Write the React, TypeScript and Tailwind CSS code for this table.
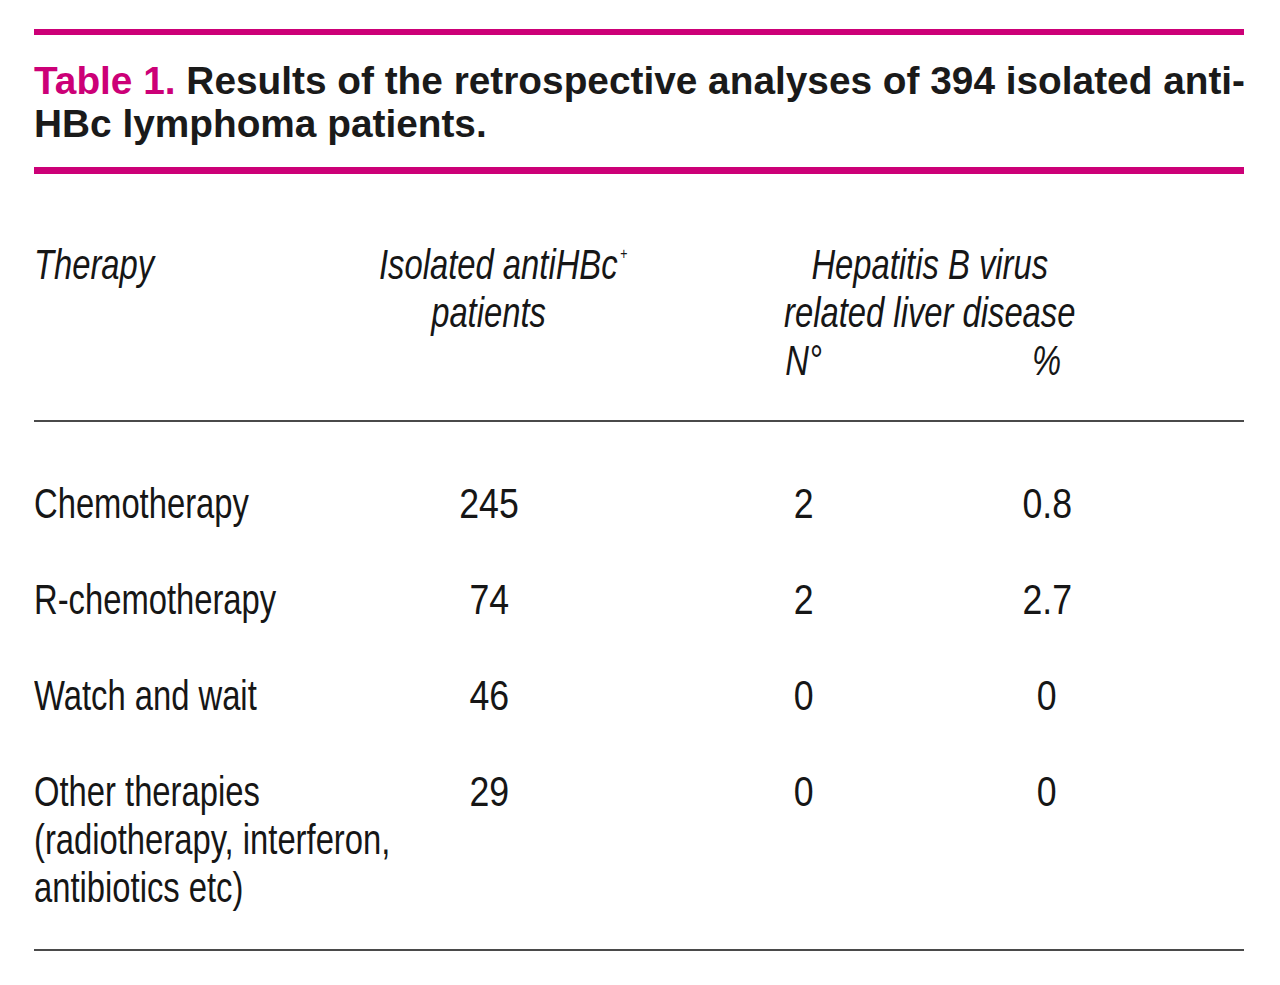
const body = "font-['Liberation_Sans',Arial,sans-serif] text-[42px] leading-[48px] text-[#161616]";

// the reference face is a condensed grotesque; Liberation Sans squeezed horizontally stands in for it
function Narrow({ children, center = false }: { children: React.ReactNode; center?: boolean }) {
  return (
    <span
      className={`inline-block whitespace-nowrap scale-x-[0.78] ${center ? "origin-center" : "origin-left"}`}
    >
      {children}
    </span>
  );
}

// digits in the reference run a little wider than its letters
function Num({ children }: { children: React.ReactNode }) {
  return <span className="inline-block origin-center scale-x-[0.85] whitespace-nowrap">{children}</span>;
}

const rows: { therapy: string[]; patients: string; n: string; pct: string }[] = [
  { therapy: ["Chemotherapy"], patients: "245", n: "2", pct: "0.8" },
  { therapy: ["R-chemotherapy"], patients: "74", n: "2", pct: "2.7" },
  { therapy: ["Watch and wait"], patients: "46", n: "0", pct: "0" },
  {
    therapy: ["Other therapies", "(radiotherapy, interferon,", "antibiotics etc)"],
    patients: "29",
    n: "0",
    pct: "0",
  },
];

export default function App() {
  return (
    <div className="min-h-[985px] bg-white">
      <div className="ml-[34px] w-[1210px] pt-[29px]">
        <div className="h-[6px] bg-[#cc0077]" />
        <h1 className="mt-[24px] font-['Liberation_Sans',Arial,sans-serif] text-[38.8px] font-bold leading-[43px] text-[#1a1a1a]">
          <span className="block whitespace-nowrap">
            <span className="text-[#cc0077]">Table 1.</span> Results of the retrospective analyses of 394 isolated anti-
          </span>
          <span className="block whitespace-nowrap">HBc lymphoma patients.</span>
        </h1>
        <div className="mt-[22px] h-[7px] bg-[#cc0077]" />

        {/* header */}
        <div className={`mt-[67px] grid grid-cols-[310px_290px_46px_248px_238px] italic ${body}`}>
          <div>
            <Narrow>Therapy</Narrow>
          </div>
          <div className="text-center">
            <Narrow center>
              Isolated antiHBc<sup className="ml-[3px] text-[16px] align-[12px]">+</sup>
            </Narrow>
            <br />
            <Narrow center>patients</Narrow>
          </div>
          <div />
          <div className="col-span-2 pl-[14px] text-center">
            <Narrow center>Hepatitis B virus</Narrow>
            <br />
            <Narrow center>related liver disease</Narrow>
          </div>
          <div className="col-start-4 text-center">
            <Narrow center>N°</Narrow>
          </div>
          <div className="text-center">
            <Narrow center>%</Narrow>
          </div>
        </div>

        <div className="mt-[35px] h-[2px] bg-[#4a4a4a]" />

        {/* body */}
        <div className={`mt-[58px] grid grid-cols-[310px_290px_46px_248px_238px] gap-y-[48px] ${body}`}>
          {rows.map((r) => (
            <div key={r.therapy[0]} className="contents">
              <div>
                {r.therapy.map((line) => (
                  <div key={line}>
                    <Narrow>{line}</Narrow>
                  </div>
                ))}
              </div>
              <div className="text-center">
                <Num>{r.patients}</Num>
              </div>
              <div />
              <div className="text-center">
                <Num>{r.n}</Num>
              </div>
              <div className="text-center">
                <Num>{r.pct}</Num>
              </div>
            </div>
          ))}
        </div>

        <div className="mt-[37px] h-[2px] bg-[#4a4a4a]" />
      </div>
    </div>
  );
}
